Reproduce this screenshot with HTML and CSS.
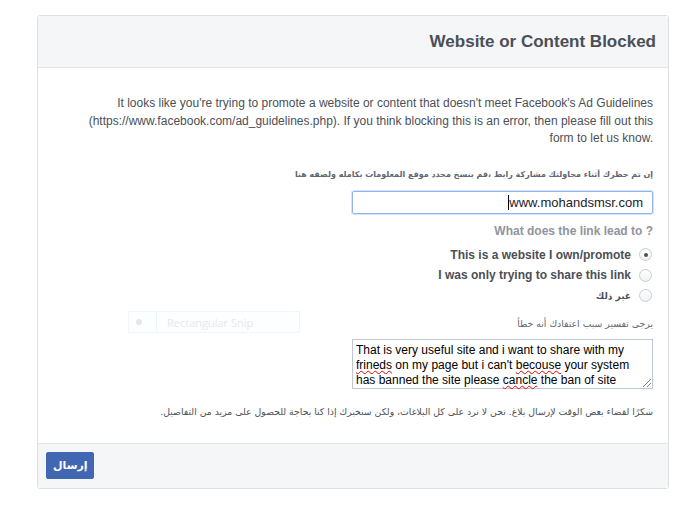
FILE: index.html
```html
<!DOCTYPE html>
<html>
<head>
<meta charset="utf-8">
<link rel="stylesheet" href="styles.css">
</head>
<body>
<div class="card">
  <div class="header">
    <h1 class="title">Website or Content Blocked</h1>
  </div>
  <div class="content">
    <p class="intro">It looks like you're trying to promote a website or content that doesn't meet Facebook's Ad Guidelines (https://www.facebook.com/ad_guidelines.php). If you think blocking this is an error, then please fill out this form to let us know.</p>
    <div class="label ar">إن تم حظرك أثناء محاولتك مشاركة رابط ،قم بنسخ محدد موقع المعلومات بكامله ولصقه هنا</div>
    <div class="input"><span class="caret"></span>www.mohandsmsr.com</div>
    <div class="question">What does the link lead to ?</div>
    <div class="options">
      <div class="option"><span class="radio checked"></span><span class="opt-text">This is a website I own/promote</span></div>
      <div class="option"><span class="radio"></span><span class="opt-text">I was only trying to share this link</span></div>
      <div class="option"><span class="radio"></span><span class="opt-text ar">غير ذلك</span></div>
    </div>
    <div class="label ar label2">يرجى تفسير سبب اعتقادك أنه خطأ</div>
    <div class="textarea">That is very useful site and i want to share with my <u class="sp">frineds</u> on my page but i can't <u class="sp">becouse</u> your system has banned the site please <u class="sp">cancle</u> the ban of site<span class="grip"></span></div>
    <p class="thanks ar">شكرًا لقضاء بعض الوقت لإرسال بلاغ. نحن لا نرد على كل البلاغات، ولكن سنخبرك إذا كنا بحاجة للحصول على مزيد من التفاصيل.</p>
    <div class="snip"><span class="snip-dot"></span><span class="snip-text">Rectangular Snip</span></div>
  </div>
  <div class="footer">
    <button class="send ar">إرسال</button>
  </div>
</div>
</body>
</html>
```
FILE: styles.css
```css
* { box-sizing: border-box; }
body {
  margin: 0;
  background: #fff;
  font-family: "Liberation Sans", Arial, sans-serif;
  color: #4b4f56;
}
.ar { font-family: "DejaVu Sans", "Liberation Sans", sans-serif; }
.card {
  margin: 15px 0 0 37px;
  width: 632px;
  border: 1px solid #dddfe2;
  border-radius: 3px;
  background: #fff;
}
.header {
  height: 52px;
  background: #f5f6f7;
  border-bottom: 1px solid #e5e5e5;
  display: flex;
  align-items: center;
  justify-content: flex-end;
  padding-right: 12px;
}
.title {
  margin: 0;
  font-size: 17px;
  font-weight: bold;
  color: #4b4f56;
}
.content {
  position: relative;
  padding: 27px 15px 24px 15px;
  display: flex;
  flex-direction: column;
  align-items: flex-end;
}
.intro {
  margin: 0;
  max-width: 590px;
  font-size: 12px;
  line-height: 17.5px;
  text-align: right;
  color: #4b4f56;
}
.label {
  margin-top: 20px;
  direction: rtl;
  font-size: 8px;
  line-height: 14px;
  font-weight: bold;
  color: #606770;
}
.input {
  margin-top: 9px;
  width: 301px;
  height: 23px;
  border: 1px solid #8fb4f0;
  box-shadow: 0 0 0 1px #d6e4fb;
  border-radius: 2px;
  font-size: 13px;
  color: #1d2129;
  text-align: right;
  padding: 2px 9px 0 0;
  line-height: 17px;
}
.caret {
  display: inline-block;
  width: 1px;
  height: 15px;
  background: #000;
  vertical-align: -3px;
}
.question {
  margin-top: 10px;
  font-size: 12px;
  line-height: 14px;
  font-weight: bold;
  color: #90949c;
}
.options {
  margin-top: 10px;
  display: flex;
  flex-direction: column;
  align-items: flex-end;
  gap: 6.5px;
}
.option {
  display: flex;
  flex-direction: row-reverse;
  align-items: center;
  gap: 8px;
  height: 14px;
}
.opt-text {
  font-size: 12px;
  font-weight: bold;
  color: #4b4f56;
}
.opt-text.ar { font-size: 9px; }
.radio {
  width: 13px;
  height: 13px;
  border-radius: 50%;
  border: 1px solid #c9ccd1;
  background: linear-gradient(#fff, #f1f2f4);
  position: relative;
  margin-right: 1px;
}
.radio.checked::after {
  content: "";
  position: absolute;
  left: 3.5px;
  top: 3.5px;
  width: 4px;
  height: 4px;
  border-radius: 50%;
  background: #4b4f56;
}
.label2 {
  margin-top: 14px;
  font-weight: normal;
  font-size: 9.3px;
  color: #606770;
}
.textarea {
  position: relative;
  margin-top: 8px;
  width: 301px;
  height: 50px;
  border: 1px solid #bdc7d8;
  font-size: 12px;
  line-height: 15px;
  color: #000;
  padding: 3px 12px 0 3px;
  text-align: left;
}
.sp {
  text-decoration: underline wavy #e00;
  text-decoration-thickness: 1px;
  text-underline-offset: 1px;
}
.grip {
  position: absolute;
  right: 1px;
  bottom: 1px;
  width: 8px;
  height: 8px;
  background: linear-gradient(135deg, transparent 45%, #888 45%, #888 55%, transparent 55%, transparent 70%, #888 70%, #888 80%, transparent 80%);
}
.thanks {
  margin: 16px 0 0 0;
  direction: rtl;
  font-size: 9.3px;
  line-height: 14px;
  color: #4b4f56;
}
.snip {
  position: absolute;
  left: 90px;
  top: 243px;
  width: 172px;
  height: 22px;
  border: 1px solid #eef5fb;
  background: #fcfeff;
  display: flex;
  align-items: center;
}
.snip-dot {
  width: 6px;
  height: 6px;
  border-radius: 50%;
  background: #e6e6e6;
  margin: 0 14px 0 7px;
}
.snip-text {
  border-left: 1px solid #eef5fb;
  padding-left: 10px;
  height: 100%;
  display: flex;
  align-items: center;
  font-family: "Open Sans", sans-serif;
  font-size: 11px;
  color: #e8e8e8;
}
.footer {
  height: 45px;
  background: #f5f6f7;
  border-top: 1px solid #e5e5e5;
  display: flex;
  align-items: center;
  padding-left: 8px;
}
.send {
  width: 48px;
  height: 27px;
  background: #4267b2;
  border: 1px solid #4267b2;
  border-radius: 2px;
  color: #fff;
  font-weight: bold;
  font-size: 11px;
}
```
